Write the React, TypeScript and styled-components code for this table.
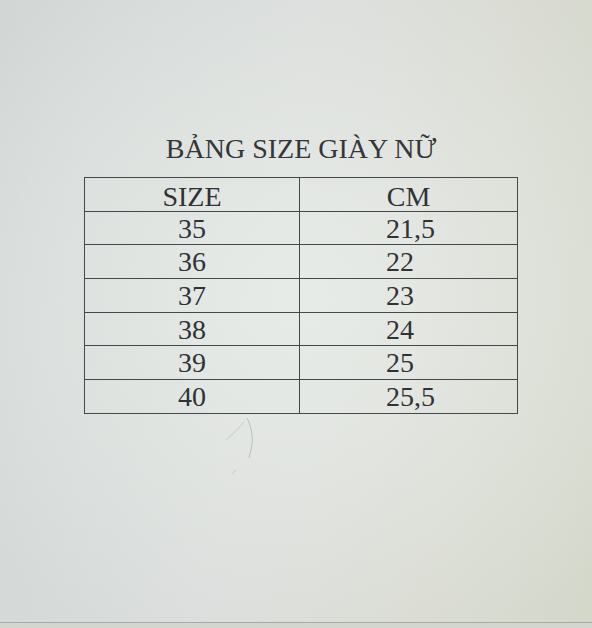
import React from "react";
import styled, { createGlobalStyle } from "styled-components";

const Global = createGlobalStyle`
  html, body { margin: 0; padding: 0; }
  body { width: 592px; height: 628px; overflow: hidden; background: #d6d9d4; }
`;

const Page = styled.div`
  position: relative;
  width: 592px;
  height: 628px;
  display: flex;
  flex-direction: column;
  background:
    radial-gradient(ellipse 420px 380px at 300px 300px, rgba(233, 237, 233, 0.9), rgba(233, 237, 233, 0) 100%),
    linear-gradient(100deg, #d2d7d6 0%, #dadddb 45%, #d9dbd2 75%, #d4d8cb 100%);
  font-family: "Liberation Serif", "Times New Roman", serif;
  color: #33353a;
`;

const Sheet = styled.div`
  flex: 1;
  padding: 133px 0 0 84px;
  border-bottom: 1px solid #a7aba6;
`;

const Edge = styled.div`
  height: 5px;
  background: #d3d6ce;
`;

const Title = styled.h1`
  width: 434px;
  margin: 0 0 12px;
  font-size: 28px;
  font-weight: normal;
  line-height: 32px;
  text-align: center;
  color: #34363b;
`;

const Table = styled.div`
  width: 434px;
  box-sizing: border-box;
  display: grid;
  grid-template-columns: 214px 1fr;
  border: 1px solid #44474b;
  border-bottom: none;
`;

const Cell = styled.div<{ $col: number; $head?: boolean }>`
  height: 33.7px;
  box-sizing: border-box;
  border-bottom: 1px solid #44474b;
  border-left: ${(p) => (p.$col === 1 ? "1px solid #44474b" : "none")};
  font-size: 28px;
  line-height: 33px;
  padding-top: ${(p) => (p.$head ? "2px" : "0")};
  padding-left: ${(p) => (p.$col === 1 && !p.$head ? "86px" : "0")};
  text-align: ${(p) => (p.$col === 1 && !p.$head ? "left" : "center")};
  color: #303237;
  white-space: nowrap;
`;

const Mark = styled.svg`
  position: absolute;
  left: 220px;
  top: 412px;
  width: 40px;
  height: 70px;
  pointer-events: none;
`;

const rows: [string, string][] = [
  ["35", "21,5"],
  ["36", "22"],
  ["37", "23"],
  ["38", "24"],
  ["39", "25"],
  ["40", "25,5"],
];

export default function App() {
  return (
    <Page>
      <Global />
      <Sheet>
        <Title>BẢNG SIZE GIÀY NỮ</Title>
        <Table>
          <Cell $col={0} $head>SIZE</Cell>
          <Cell $col={1} $head>CM</Cell>
          {rows.map(([s, cm]) => (
            <React.Fragment key={s}>
              <Cell $col={0}>{s}</Cell>
              <Cell $col={1}>{cm}</Cell>
            </React.Fragment>
          ))}
        </Table>
      </Sheet>
      <Edge />
      <Mark viewBox="0 0 40 70">
        <path
          d="M27 6 C31 14 33 24 32 32 C31 38 30 42 29 46"
          fill="none"
          stroke="#bcc0bc"
          strokeWidth="1"
        />
        <path d="M24 10 C19 16 12 23 6 28" fill="none" stroke="#c5c9c5" strokeWidth="1" />
        <path d="M16 58 L12 62" fill="none" stroke="#c8cbc7" strokeWidth="1" />
      </Mark>
    </Page>
  );
}
